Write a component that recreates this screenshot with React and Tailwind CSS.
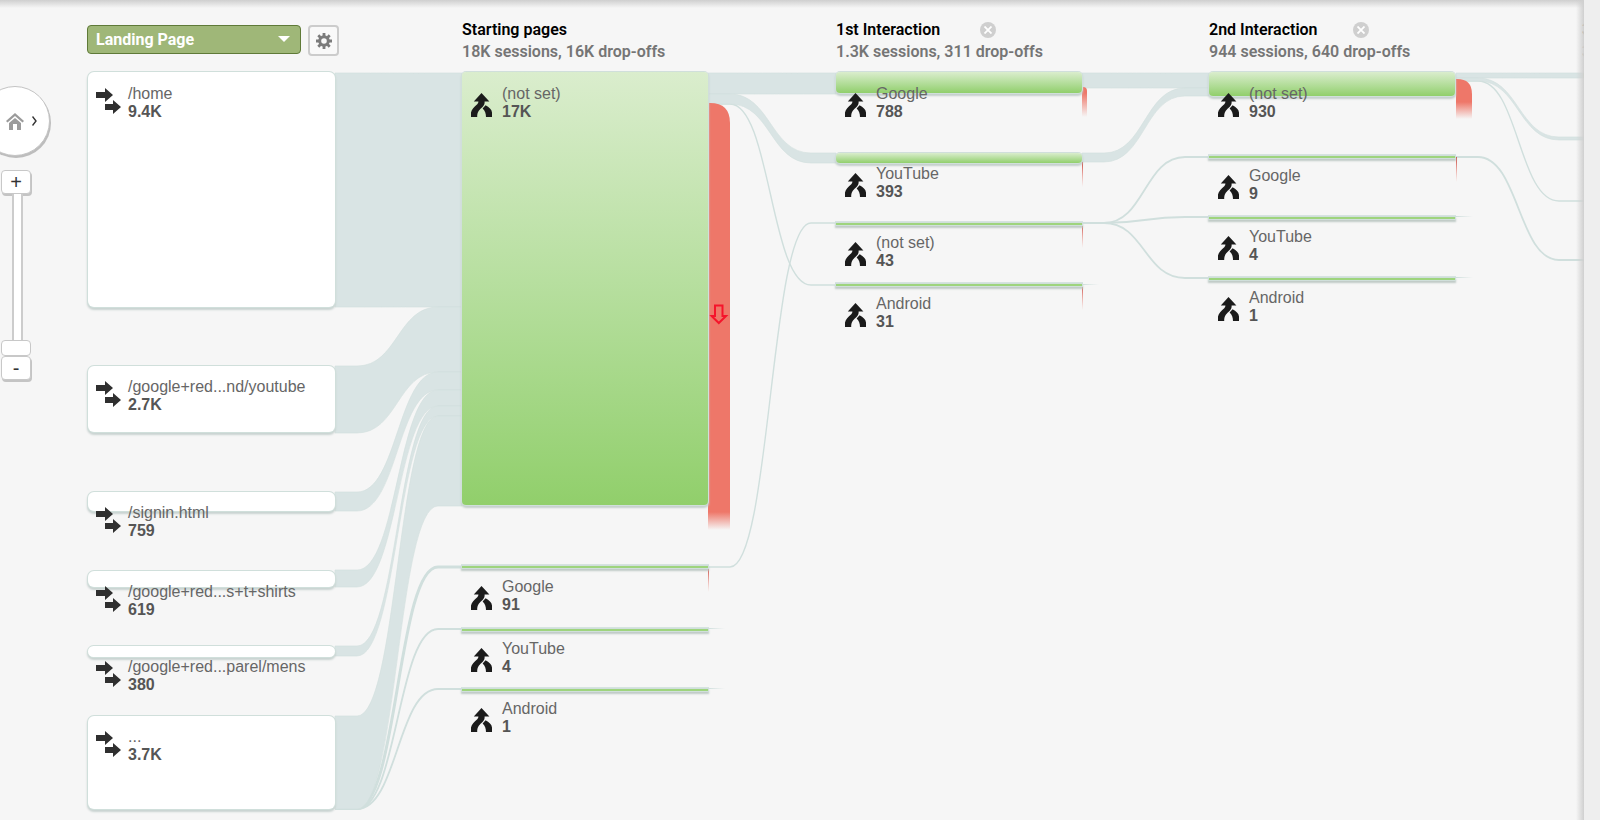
import React, { useState } from 'react'

const CURVE_START = 22
const CURVE_WIDTH = 81

const steps = [
  { title: 'Starting pages', detail: '18K sessions, 16K drop-offs', width: 'w-[374px]' },
  { title: '1st Interaction', detail: '1.3K sessions, 311 drop-offs', width: 'w-[373px]', closable: true },
  { title: '2nd Interaction', detail: '944 sessions, 640 drop-offs', width: 'w-[373px]', closable: true },
  { title: '3rd Interaction', detail: '304 sessions', width: 'w-[374px]' },
]

// y/h are the bar, textY is the first label line
const landingPages = [
  { x: 88, y: 72, h: 235, textY: 85, label: '/home', value: '9.4K' },
  { x: 88, y: 366, h: 66, textY: 378, label: '/google+red...nd/youtube', value: '2.7K' },
  { x: 88, y: 492, h: 19, textY: 504, label: '/signin.html', value: '759' },
  { x: 88, y: 571, h: 16, textY: 583, label: '/google+red...s+t+shirts', value: '619' },
  { x: 88, y: 646, h: 11, textY: 658, label: '/google+red...parel/mens', value: '380' },
  { x: 88, y: 716, h: 93, textY: 728, label: '...', value: '3.7K' },
]

const eventNodes = [
  { x: 462, y: 72, h: 433, textY: 85, label: '(not set)', value: '17K' },
  { x: 462, y: 566, h: 2, textY: 578, label: 'Google', value: '91' },
  { x: 462, y: 629, h: 2, textY: 640, label: 'YouTube', value: '4' },
  { x: 462, y: 689, h: 2, textY: 700, label: 'Android', value: '1' },
  { x: 836, y: 72, h: 21, textY: 85, label: 'Google', value: '788' },
  { x: 836, y: 153, h: 10, textY: 165, label: 'YouTube', value: '393' },
  { x: 836, y: 223, h: 2, textY: 234, label: '(not set)', value: '43' },
  { x: 836, y: 284, h: 2, textY: 295, label: 'Android', value: '31' },
  { x: 1209, y: 72, h: 24, textY: 85, label: '(not set)', value: '930' },
  { x: 1209, y: 156, h: 2, textY: 167, label: 'Google', value: '9' },
  { x: 1209, y: 217, h: 2, textY: 228, label: 'YouTube', value: '4' },
  { x: 1209, y: 278, h: 2, textY: 289, label: 'Android', value: '1' },
]

// [x0, top0, bottom0, x1, top1, bottom1]
const bands = [
  [335, 73, 307, 462, 73, 307],
  [335, 366, 433, 462, 307, 372],
  [335, 492, 511, 462, 372, 390],
  [335, 570, 587, 462, 390, 406],
  [335, 646, 656, 462, 406, 416],
  [335, 716, 809, 462, 416, 506],
  [708, 73, 94, 836, 73, 94],
  [708, 94, 104, 836, 153, 163],
  [1082, 73, 88, 1209, 73, 88],
  [1082, 153, 162, 1209, 88, 96],
  [1456, 73, 78, 1584, 73, 78],
  [1456, 78, 81, 1584, 137, 140],
]

// [x0, y0, x1, y1, width]
const threads = [
  [335, 808, 462, 567, 3],
  [335, 809, 462, 629, 1.8],
  [335, 809, 462, 689, 1.8],
  [708, 104, 836, 285, 1.4],
  [708, 567, 836, 223, 1.4],
  [1082, 223, 1209, 157, 1.8],
  [1082, 223, 1209, 217, 1.8],
  [1082, 223, 1209, 278, 1.8],
  [1456, 81, 1584, 201, 1.4],
  [1456, 157, 1584, 260, 1.8],
]

const stubs = [[708, 628], [708, 688], [1082, 284], [1456, 216], [1456, 277]]

const dropOffs = [
  { x: 708, y: 103, w: 22, h: 427, r: 20, fade: 18 },
  { x: 708, y: 567, w: 1, h: 25, r: 0, fade: 25 },
  { x: 1082, y: 87, w: 5, h: 30, r: 4, fade: 24 },
  { x: 1082, y: 162, w: 1, h: 25, r: 0, fade: 25 },
  { x: 1082, y: 223, w: 1, h: 25, r: 0, fade: 25 },
  { x: 1082, y: 284, w: 1, h: 26, r: 0, fade: 26 },
  { x: 1456, y: 79, w: 16, h: 40, r: 15, fade: 17 },
  { x: 1456, y: 157, w: 1, h: 25, r: 0, fade: 25 },
]

function curve(x0, y0, x1, y1) {
  const a = x0 + CURVE_START
  const b = a + CURVE_WIDTH
  const mid = (a + b) / 2
  return `M${x0} ${y0} H${a} C${mid} ${y0} ${mid} ${y1} ${b} ${y1} H${x1}`
}

function bandPath([x0, t0, b0, x1, t1, b1]) {
  const a = x0 + CURVE_START
  const b = a + CURVE_WIDTH
  const mid = (a + b) / 2
  return `${curve(x0, t0, x1, t1)} V${b1} H${b} C${mid} ${b1} ${mid} ${b0} ${a} ${b0} H${x0} Z`
}

function dropPath({ x, y, w, h, r }) {
  return `M${x} ${y} H${x + w - r} Q${x + w} ${y} ${x + w} ${y + r} V${y + h} H${x} Z`
}

function Flows() {
  return (
    <svg className="pointer-events-none absolute inset-0 h-full w-full" aria-hidden="true">
      <defs>
        <linearGradient id="stub">
          <stop offset="0" stopColor="#cfdedc" />
          <stop offset="1" stopColor="#cfdedc" stopOpacity="0" />
        </linearGradient>
        {dropOffs.map((d, i) => (
          <linearGradient key={i} id={`drop${i}`} x1="0" y1="0" x2="0" y2="1">
            <stop offset={1 - d.fade / d.h} stopColor={d.w === 1 ? '#c8453c' : '#ee7769'} />
            <stop offset="1" stopColor="#ee7769" stopOpacity="0" />
          </linearGradient>
        ))}
      </defs>
      {threads.map(([x0, y0, x1, y1, w], i) => (
        <path key={i} d={curve(x0, y0, x1, y1)} fill="none" stroke="#d0dfdd" strokeWidth={w} />
      ))}
      {bands.map((b, i) => (
        <path key={i} d={bandPath(b)} fill="#d9e4e4" stroke="#d2dfde" strokeWidth="0.6" />
      ))}
      {stubs.map(([x, y], i) => (
        <rect key={i} x={x} y={y} width="17" height="1" fill="url(#stub)" />
      ))}
      {dropOffs.map((d, i) => (
        <path key={i} d={dropPath(d)} fill={`url(#drop${i})`} />
      ))}
      <path d="M715 305.5 h7.5 v10.5 h3.5 l-7.2 7 l-7.2 -7 h3.4 Z" fill="none" stroke="#f5142b" strokeWidth="2" />
      <rect x="1583" y="73" width="4" height="5" fill="#b9e09e" />
    </svg>
  )
}

function ArrowsIcon() {
  return (
    <svg className="absolute top-[3px] left-2 h-[26px] w-[26px]" viewBox="0 0 26 26" fill="#2f2f2f" aria-hidden="true">
      <path d="M0 4 H9 V0 L17 7 L9 14 V10 H0 Z" />
      <path d="M9 16 H17 V12 L25 19 L17 26 V22 H9 Z" />
    </svg>
  )
}

function MergeIcon() {
  return (
    <svg className="absolute top-2 left-[9px] h-6 w-[22px]" viewBox="0 0 22 24" fill="#1b1b1b" aria-hidden="true">
      <path d="M2.8 8.4 L10.5 0 L18.4 8.4 H13.6 V10 C13.4 12.2 12 13.6 10.4 15 C8 17.4 6.2 19 6.2 24 H0 V19.5 C0.6 16 3.4 14 5.4 12 C6.8 10.6 7.4 9.8 7.4 8.4 Z" />
      <path d="M11.6 15.4 L14.6 12.2 C18 14 20.8 16.4 21 19.5 V24 H15 C15 20 14 17.6 11.6 15.4 Z" />
    </svg>
  )
}

function barStyle(node, landing) {
  if (landing) return 'rounded-md bg-white shadow-[0_0_0_1px_#d0dfdb,0_2px_2px_1px_#c9d3d1]'
  if (node.h < 5) return 'bg-[#9ed47d] shadow-[0_0_0_1px_#d0dfdb,0_-1px_0_1px_#d6e3e0,0_2px_2px_1px_#bfcac6]'
  return 'rounded bg-linear-to-b from-[#daedcd] to-[#91cf6b] shadow-[0_0_0_1px_#d0dfdb,0_2px_2px_1px_#c4cfcc]'
}

function FlowNode({ node, landing }) {
  return (
    <div className={`absolute ${landing ? 'w-[247px]' : 'w-[246px]'}`} style={{ left: node.x, top: node.y }}>
      <div className={barStyle(node, landing)} style={{ height: node.h }} />
      <div className="absolute left-0 w-full" style={{ top: node.textY - node.y }}>
        {landing ? <ArrowsIcon /> : <MergeIcon />}
        <div className="pl-10 text-base leading-[18px] text-[#666]">
          <div className="whitespace-nowrap">{node.label}</div>
          <div className="font-bold text-[#555]">{node.value}</div>
        </div>
      </div>
    </div>
  )
}

function StepHeader({ step }) {
  return (
    <div className={`${step.width} shrink-0 whitespace-nowrap`}>
      <div className="flex items-center">
        <h2 className="w-36 text-base leading-[22px] font-semibold text-black">{step.title}</h2>
        {step.closable && (
          <button aria-label={`Remove ${step.title}`} className="h-4 w-4 rounded-full bg-[#cfcfcf] p-1">
            <svg viewBox="0 0 8 8" className="h-2 w-2" stroke="#fff" strokeWidth="1.8" aria-hidden="true">
              <path d="M0.5 0.5 L7.5 7.5 M7.5 0.5 L0.5 7.5" />
            </svg>
          </button>
        )}
      </div>
      <p className="text-base leading-[22px] font-semibold text-[#757575]">{step.detail}</p>
    </div>
  )
}

function CanvasControls() {
  const [zoom, setZoom] = useState(0)
  const zoomButton =
    'h-6 w-[30px] rounded border border-[#c8c8c8] bg-white text-xl leading-5 text-[#333] shadow-[1px_2px_0_#c4c4c4]'
  return (
    <div className="absolute top-[86px] left-0 flex flex-col items-start">
      <button
        aria-label="Home"
        className="-ml-5 flex h-[70px] w-[70px] items-center gap-2 rounded-full border border-[#c4c4c4] bg-white pl-[25px] shadow-[1px_2px_0_#bdbdbd]"
      >
        <svg viewBox="0 0 18 18" className="h-[18px] w-[18px]" fill="#9b9b9b" aria-hidden="true">
          <path d="M0 9 L9 1 L18 9 L16.5 10.5 L9 4 L1.5 10.5 Z" />
          <path d="M3 11 L9 6 L15 11 V18 H11 V12 H7 V18 H3 Z" />
        </svg>
        <svg viewBox="0 0 5 10" className="h-[10px] w-[5px]" fill="none" stroke="#333" strokeWidth="1.4" aria-hidden="true">
          <path d="M0.5 0.5 L4 5 L0.5 9.5" />
        </svg>
      </button>
      <div className="mt-[14px] ml-px flex flex-col items-center">
        <button aria-label="Zoom in" className={zoomButton} onClick={() => setZoom(z => Math.min(10, z + 1))}>+</button>
        <input
          type="range"
          aria-label="Zoom level"
          min={0}
          max={10}
          value={zoom}
          onChange={e => setZoom(Number(e.target.value))}
          className="h-[162px] w-[30px] appearance-none bg-[linear-gradient(to_right,transparent_11px,#ccc_11px,#ccc_13px,#fff_13px,#fff_20px,#ccc_20px,#ccc_22px,transparent_22px)] [direction:rtl] [writing-mode:vertical-lr] [&::-webkit-slider-thumb]:h-4 [&::-webkit-slider-thumb]:w-[30px] [&::-webkit-slider-thumb]:appearance-none [&::-webkit-slider-thumb]:rounded-sm [&::-webkit-slider-thumb]:border [&::-webkit-slider-thumb]:border-[#c8c8c8] [&::-webkit-slider-thumb]:bg-white"
        />
        <button aria-label="Zoom out" className={zoomButton} onClick={() => setZoom(z => Math.max(0, z - 1))}>-</button>
      </div>
    </div>
  )
}

export default function App() {
  return (
    <div className="flex min-h-screen bg-[#eee] font-[family-name:'Liberation_Sans',Arial,sans-serif]">
      <main className="relative min-w-0 flex-1 overflow-hidden bg-[#f6f6f6]">
        <Flows />
        <header className="flex pt-[19px] pl-[87px] font-[family-name:Roboto,sans-serif]">
          <div className="flex w-[375px] shrink-0 items-start gap-[7px] pt-[6px]">
            <div className="relative">
              <select
                aria-label="Dimension"
                className="h-[29px] w-[214px] appearance-none rounded border border-[#5f7a38] bg-[#9fb778] pl-2 text-base font-bold text-white"
              >
                <option>Landing Page</option>
                <option>Source</option>
                <option>Country</option>
              </select>
              <svg viewBox="0 0 12 6" className="pointer-events-none absolute top-[11px] right-[11px] h-[6px] w-3" fill="#fff" aria-hidden="true">
                <path d="M0 0 H12 L6 6 Z" />
              </svg>
            </div>
            <button aria-label="Settings" className="flex h-[31px] w-[31px] items-center justify-center rounded border-2 border-[#ccc] bg-[#f9f9f9]">
              <svg viewBox="0 0 16 16" className="h-4 w-4" fill="none" stroke="#7b7b7b" aria-hidden="true">
                <circle cx="8" cy="8" r="4.3" strokeWidth="3" />
                <path d="M8 0 V3 M8 13 V16 M0 8 H3 M13 8 H16 M2.3 2.3 L4.4 4.4 M11.6 11.6 L13.7 13.7 M2.3 13.7 L4.4 11.6 M11.6 4.4 L13.7 2.3" strokeWidth="2.8" />
              </svg>
            </button>
          </div>
          {steps.map(s => <StepHeader key={s.title} step={s} />)}
        </header>
        {landingPages.map(n => <FlowNode key={n.y} node={n} landing />)}
        {eventNodes.map(n => <FlowNode key={`${n.x}-${n.y}`} node={n} />)}
        <CanvasControls />
        <div className="pointer-events-none absolute inset-x-0 top-0 h-2 bg-linear-to-b from-[#cfcfcf] to-transparent" />
        <div className="pointer-events-none absolute inset-y-0 right-0 w-2 bg-linear-to-l from-[#cfcfcf] to-transparent" />
      </main>
      <aside className="w-4 shrink-0" />
    </div>
  )
}
